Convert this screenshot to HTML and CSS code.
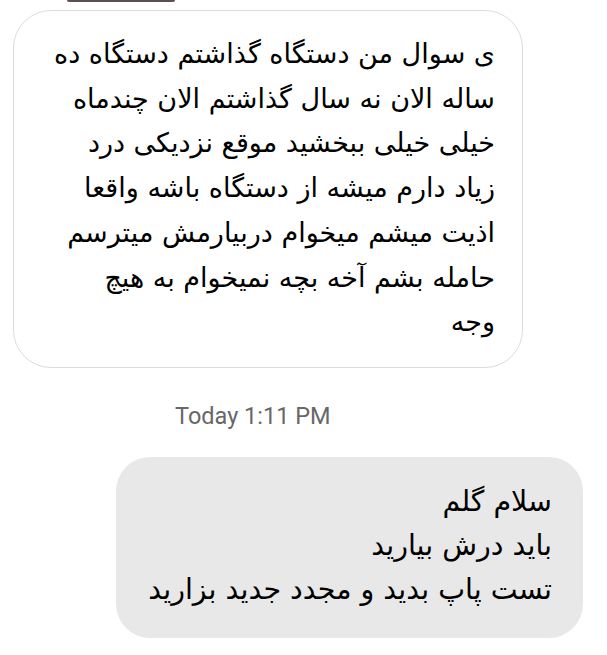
FILE: index.html
```html
<!DOCTYPE html>
<html lang="fa">
<head>
<meta charset="utf-8">
<title>Chat</title>
<link rel="stylesheet" href="styles.css">
</head>
<body>
<div class="chat">
  <div class="prev-tail"></div>
  <div class="bubble bubble-in">
    <p class="msg" dir="rtl">ی سوال من دستگاه گذاشتم دستگاه ده<br>ساله الان نه سال گذاشتم الان چندماه<br>خیلی خیلی ببخشید موقع نزدیکی درد<br>زیاد دارم میشه از دستگاه باشه واقعا<br>اذیت میشم میخوام دربیارمش میترسم<br>حامله بشم آخه بچه نمیخوام به هیچ<br>وجه</p>
  </div>
  <div class="stamp">Today 1:11 PM</div>
  <div class="bubble bubble-out">
    <p class="msg" dir="rtl">سلام گلم<br>باید درش بیارید<br>تست پاپ بدید و مجدد جدید بزارید</p>
  </div>
</div>
</body>
</html>
```
FILE: styles.css
```css
html, body {
  margin: 0;
  padding: 0;
  background: #ffffff;
}
.chat {
  width: 607px;
  height: 655px;
  overflow: hidden;
  display: flex;
  flex-direction: column;
  align-items: flex-start;
}
.prev-tail {
  margin-left: 67px;
  width: 108px;
  height: 2px;
  background: #5d4f56;
  border-radius: 0 0 6px 6px;
}
.bubble {
  box-sizing: border-box;
  border-radius: 38px;
}
.bubble-in {
  margin-top: 8px;
  margin-left: 13px;
  width: 510px;
  height: 358px;
  border: 1.5px solid #dcdcdc;
  background: #ffffff;
  padding: 21px 27px 0 12px;
}
.bubble-out {
  margin-top: 27px;
  margin-left: 116px;
  width: 467px;
  height: 181px;
  background: #e8e8e8;
  border-radius: 34px;
  padding: 23px 31px 0 12px;
}
.msg {
  margin: 0;
  font-family: "DejaVu Sans", "Noto Sans", sans-serif;
  font-size: 27px;
  line-height: 44.7px;
  color: #000000;
  text-align: right;
  white-space: nowrap;
}
.bubble-out .msg {
  font-size: 28.5px;
  line-height: 44px;
}
.stamp {
  margin-top: 34px;
  margin-left: 175px;
  font-family: Roboto, "Liberation Sans", sans-serif;
  font-size: 23.5px;
  line-height: 28px;
  color: #676767;
}
```
